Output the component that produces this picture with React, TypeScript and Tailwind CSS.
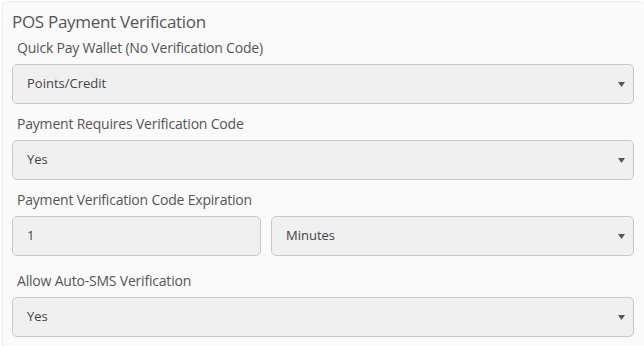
import React from "react";

function Arrow() {
  return (
    <svg width="7" height="5" viewBox="0 0 7 5" className="shrink-0">
      <path d="M0 0 L7 0 L3.5 5 Z" fill="#555" />
    </svg>
  );
}

function Select({ value, className = "" }: { value: string; className?: string }) {
  return (
    <div
      className={`flex h-[40px] items-center justify-between rounded-[5px] border border-[#c9c9c9] bg-[#f0f0f0] pl-[14px] pr-[8px] ${className}`}
    >
      <span className="text-[13px] text-[#444]">{value}</span>
      <Arrow />
    </div>
  );
}

function Label({ children }: { children: React.ReactNode }) {
  return (
    <div className="pl-[5px] text-[14px] leading-[20px] tracking-[-0.2px] text-[#555]">{children}</div>
  );
}

export default function App() {
  return (
    <div className="h-[346px] w-[644px] bg-white pl-[2px] pt-[1px]" style={{ fontFamily: '"Open Sans", sans-serif' }}>
      <div className="h-full rounded-t-[6px] border-l border-t border-[#ececec] bg-[#fafafa] pl-[9px] pr-[10px]">
        <div className="pt-[9px] text-[17px] leading-[22px] tracking-[-0.3px] text-[#555]">POS Payment Verification</div>
        <div className="mt-[5px]">
          <Label>Quick Pay Wallet (No Verification Code)</Label>
        </div>
        <Select value="Points/Credit" className="mt-[6px]" />
        <div className="mt-[10px]">
          <Label>Payment Requires Verification Code</Label>
        </div>
        <Select value="Yes" className="mt-[6px]" />
        <div className="mt-[10px]">
          <Label>Payment Verification Code Expiration</Label>
        </div>
        <div className="mt-[6px] flex gap-[10px]">
          <div className="flex h-[40px] w-[249px] items-center rounded-[5px] border border-[#c9c9c9] bg-[#f0f0f0] pl-[14px] text-[13px] text-[#444]">
            1
          </div>
          <Select value="Minutes" className="flex-1" />
        </div>
        <div className="mt-[15px]">
          <Label>Allow Auto-SMS Verification</Label>
        </div>
        <Select value="Yes" className="mt-[6px]" />
      </div>
    </div>
  );
}
